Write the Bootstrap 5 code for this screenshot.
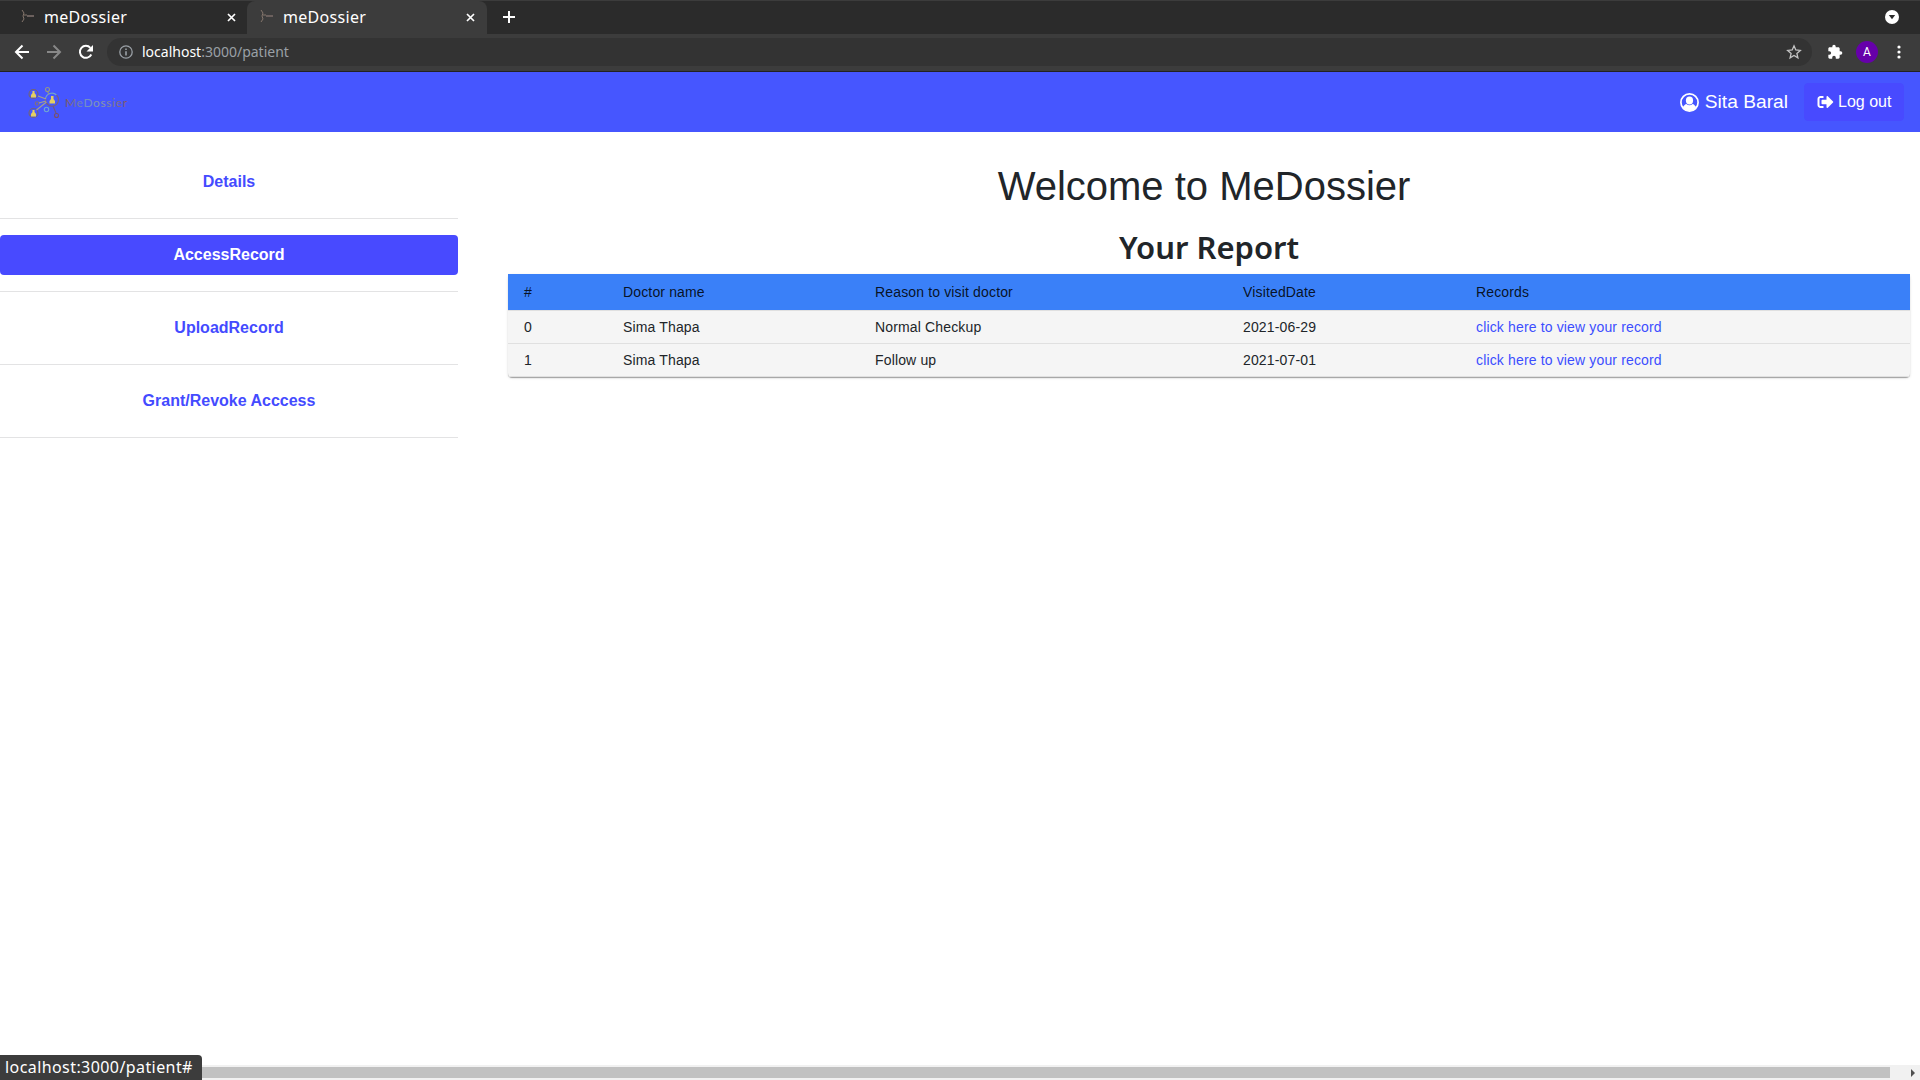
<!DOCTYPE html>
<html lang="en">
<head>
<meta charset="utf-8">
<title>meDossier</title>
<link href="https://cdn.jsdelivr.net/npm/bootstrap@5.3.0/dist/css/bootstrap.min.css" rel="stylesheet">
<style>
body{font-family:"Liberation Sans",Arial,sans-serif;color:#212529;background:#fff;height:1080px;overflow:hidden}
svg{display:block;flex:none}
.ui-font{font-family:"Noto Sans","Open Sans",sans-serif}
.tabstrip{height:34px;background:#2b2b2b;border-top:1px solid #3c3c3c}
.tab-item{height:33px;color:#fff;font-size:16px;line-height:24px;padding-top:4px;flex:none}
.tab-one{width:247px;padding-left:21px}
.tab-two{width:240px;padding-left:13px;background:#3c3c3c;border-radius:8px 8px 0 0}
.tab-title{margin-left:9px;width:183px;letter-spacing:.3px}
.tab-x{margin-top:8px}
.tab-plus{margin-left:16px;margin-top:9px}
.tab-menu{margin-right:21px;margin-top:8px}
.toolbar{height:38px;background:#3c3c3c;border-bottom:1px solid #222;padding:4px 19px 0 14px}
.tool-row{height:28px}
.omnibox{height:28px;width:1705px;flex:none;border-radius:14px;background:#333;margin-left:13px;padding:0 10px 0 12px;color:#9aa0a6;font-size:14px;line-height:26px}
.omnibox b{font-weight:400;color:#fff}
.url-text{margin-left:9px}
.avatar-dot{width:22px;height:22px;border-radius:50%;background:#60a;color:#fff;font:12px/22px Roboto,sans-serif;text-align:center;margin:0 19px 0 13px}
.topnav{height:60px;background:#4656ff;color:#fff;padding:0 16px 0 27px}
.user-name{font-size:19.2px;margin-left:6px;margin-right:16px}
.btn-logout{--bs-btn-color:#fff;--bs-btn-bg:#484aff;--bs-btn-border-color:#484aff;--bs-btn-border-radius:4px;width:100px;height:38px;padding:0 0 0 12px;line-height:36px}
.side{width:458px;flex:none;padding-top:14px}
.side-item{height:73px;border-bottom:1px solid #e3e3e4;padding:16px 0}
.side-item .nav-link{height:40px;padding:8px;line-height:24px;font-weight:700;color:#444bff;text-align:center;border-radius:4px}
.side-item .nav-link.active{background:#484aff;color:#fff}
.main-area{padding:30px 10px 0 40px}
.welcome{font-size:40px;line-height:48px;margin:0}
.report-title{font-family:"Noto Sans","Open Sans",sans-serif;font-weight:600;font-size:31px;line-height:38px;margin:18px 0 8px 10px}
.record-box{margin-left:10px;border-radius:4px;background:#f5f5f5;box-shadow:0 2px 1px -1px rgba(0,0,0,.2),0 1px 1px 0 rgba(0,0,0,.14),0 1px 3px 0 rgba(0,0,0,.12)}
.record-table{width:100%;table-layout:fixed;margin:0;font-size:14px;letter-spacing:.15px;border-collapse:separate;border-spacing:0}
.record-table th,.record-table td{padding:6px 24px 6px 16px;border-bottom:1px solid #e0e0e0;font-weight:400;line-height:20px;text-align:left}
.record-table th{background:#3a80f8;color:rgba(0,0,0,.87);line-height:24px}
.record-table a{color:#3c4eff;text-decoration:none}
.hscroll{height:15px;background:#f1f1f1}
.hthumb{width:1890px;height:11px;background:#c1c1c1}
.status-tip{left:0;bottom:0;width:202px;height:25px;background:#3c3c3c;color:#fff;border-top-right-radius:4px;font-size:16px;letter-spacing:.42px;line-height:24px;padding-left:5px;white-space:nowrap}
</style>
<script src="https://cdn.jsdelivr.net/npm/bootstrap@5.3.0/dist/js/bootstrap.bundle.min.js"></script>
</head>
<body class="d-flex flex-column position-relative">
<svg width="0" height="0" class="position-absolute"><defs>
<g id="fav" fill="none"><path d="M1 1l2 3-1 3 1 3-2 3M3 6h3" stroke="#85766c"/><path d="M6 7h7" stroke-width="2" stroke="#6b605d"/></g>
<path id="cross" d="M1 1l7 7M8 1l-7 7" stroke="#fff" stroke-width="1.7"/>
<linearGradient id="brand-ink"><stop offset="0" stop-color="#7c5560"/><stop offset=".3" stop-color="#6f8fc4"/><stop offset=".6" stop-color="#8a9aa8"/><stop offset="1" stop-color="#7d5068"/></linearGradient>
</defs></svg>
<div class="tabstrip d-flex ui-font">
  <div class="tab-item tab-one d-flex"><svg width="14" height="14" class="mt-1"><use href="#fav"/></svg><span class="tab-title">meDossier</span><svg class="tab-x" width="9" height="9"><use href="#cross"/></svg></div>
  <div class="tab-item tab-two d-flex"><svg width="14" height="14" class="mt-1"><use href="#fav"/></svg><span class="tab-title">meDossier</span><svg class="tab-x" width="9" height="9"><use href="#cross"/></svg></div>
  <svg class="tab-plus" width="12" height="14"><path d="M6 1v12M0 7h12" stroke="#fff" stroke-width="2"/></svg>
  <svg class="ms-auto tab-menu" width="14" height="16"><circle cx="7" cy="8" r="7" fill="#fff"/><path d="M3.800 6h6.400L7 10.200z" fill="#2b2b2b"/></svg>
</div>
<div class="toolbar d-flex align-items-start ui-font">
  <div class="tool-row d-flex align-items-center">
    <svg width="16" height="16" fill="none" stroke="#fff" stroke-width="2"><path d="M15 8H3M8.500 1.500L2 8l6.500 6.500"/></svg>
    <svg width="16" height="16" fill="none" stroke="#888" stroke-width="2" class="ms-3"><path d="M1 8h12M7.500 1.500L14 8l-6.500 6.500"/></svg>
    <svg width="16" height="16" class="ms-3"><path d="M13.300 10.500A6 6 0 1 1 12.400 3.800" fill="none" stroke="#fff" stroke-width="2"/><path d="M15 1v6.500H8.500z" fill="#fff"/></svg>
  </div>
  <div class="omnibox d-flex align-items-center">
    <svg width="14" height="14" fill="none" stroke="#9aa0a6"><circle cx="7" cy="7" r="6.200" stroke-width="1.300"/><path d="M7 6.200v4.300M7 3.500v1.500" stroke-width="1.600"/></svg>
    <span class="url-text"><b>localhost</b>:3000/patient</span>
    <svg class="ms-auto" width="16" height="16" fill="none" stroke="#c4c4c4" stroke-width="1.300"><path d="M8 1.800l1.800 4.200 4.500.4-3.400 3 1 4.400L8 11.500l-3.900 2.300 1-4.400-3.400-3 4.500-.4z"/></svg>
  </div>
  <div class="tool-row d-flex align-items-center ms-auto">
    <svg width="16" height="16" viewBox="0 0 24 24" fill="#fff"><path d="M20.500 11H19V7c0-1.100-.9-2-2-2h-4V3.500a2.500 2.500 0 0 0-5 0V5H4c-1.100 0-2 .9-2 2v3.800h1.500a2.700 2.700 0 0 1 0 5.400H2V20c0 1.100.9 2 2 2h3.800v-1.500a2.700 2.700 0 0 1 5.400 0V22H17c1.100 0 2-.9 2-2v-4h1.500a2.500 2.500 0 0 0 0-5z"/></svg>
    <div class="avatar-dot">A</div>
    <svg width="4" height="14" fill="#fff"><circle cx="2" cy="2" r="1.600"/><circle cx="2" cy="7" r="1.600"/><circle cx="2" cy="12" r="1.600"/></svg>
  </div>
</div>
<nav class="topnav d-flex align-items-center">
  <svg width="104" height="34" fill="none" stroke="#96917a" stroke-width="1.100">
    <circle cx="6.500" cy="9" r="4.500" stroke="#716476"/><circle cx="6.500" cy="28" r="4.500" stroke="#716476"/><path d="M18.500 14a6.500 6.500 0 0 1 11-4" stroke="#74a4cc"/><path d="M29.500 10a6.500 6.500 0 1 1-11 4" stroke="#77617c"/><circle cx="20.500" cy="4.500" r="2" stroke="#949788"/><circle cx="10" cy="18.500" r="1.800" stroke="#84707a"/><circle cx="19.500" cy="24.500" r="2.200" stroke="#70a8d0"/><circle cx="29.500" cy="30.500" r="2" stroke="#7a5068"/>
    <path d="M11 11l8 3M12 18l7-2M9.500 25l10-8" stroke="#a6a28c"/><path d="M20.500 6.500l1.500 3" stroke="#949788"/><path d="M26 21l3 7" stroke="#705a7a"/>
    <g fill="#e4cf62" stroke="none"><path d="M5.500 6h2v2l1.500 2v2.500H4V10l1.500-2zM5.500 25h2v2l1.500 2v2.500H4V29l1.500-2zM24 11h2.500v3l1.500 2v2.500h-5.500V16l1.500-2z"/></g>
    <text x="38" y="21.500" font-family="Lato" font-size="12" fill="url(#brand-ink)" stroke="none" textLength="62">MeDossier</text>
  </svg>
  <svg class="ms-auto" width="19" height="19" fill="#fff"><circle cx="9.500" cy="9.500" r="8.600" fill="none" stroke="#fff" stroke-width="1.700"/><ellipse cx="9.500" cy="7.500" rx="3.600" ry="4"/><path d="M2.800 14.200C4 12.300 5.300 11.300 6.400 11c1.800 1.800 4.400 1.800 6.200 0 1.100.3 2.400 1.300 3.600 3.200-1.600 2.400-4 3.700-6.700 3.700s-5.100-1.300-6.700-3.700z"/></svg>
  <span class="user-name">Sita Baral</span>
  <a class="btn btn-logout d-flex align-items-center" href="#"><svg width="17" height="16" viewBox="0 0 512 512" fill="#fff"><path d="M497 273L329 441c-15 15-41 4.500-41-17v-96H152c-13.300 0-24-10.700-24-24v-96c0-13.300 10.700-24 24-24h136V88c0-21.400 25.900-32 41-17l168 168c9.300 9.400 9.300 24.600 0 34zM192 436v-40c0-6.600-5.400-12-12-12H96c-17.700 0-32-14.300-32-32V160c0-17.700 14.300-32 32-32h84c6.600 0 12-5.400 12-12V76c0-6.600-5.400-12-12-12H96c-53 0-96 43-96 96v192c0 53 43 96 96 96h84c6.600 0 12-5.400 12-12z"/></svg><span class="ms-1">Log out</span></a>
</nav>
<div class="d-flex flex-grow-1">
  <aside class="side nav flex-column flex-nowrap">
    <div class="side-item"><a class="nav-link" href="#">Details</a></div>
    <div class="side-item"><a class="nav-link active" href="#">AccessRecord</a></div>
    <div class="side-item"><a class="nav-link" href="#">UploadRecord</a></div>
    <div class="side-item"><a class="nav-link" href="#">Grant/Revoke Acccess</a></div>
  </aside>
  <main class="main-area flex-grow-1">
    <h1 class="welcome text-center">Welcome to MeDossier</h1>
    <h2 class="report-title text-center">Your Report</h2>
    <div class="record-box">
      <table class="record-table">
        <colgroup><col style="width:99px"><col style="width:252px"><col style="width:368px"><col style="width:233px"><col></colgroup>
        <thead><tr><th>#</th><th>Doctor name</th><th>Reason to visit doctor</th><th>VisitedDate</th><th>Records</th></tr></thead>
        <tbody>
          <tr><td>0</td><td>Sima Thapa</td><td>Normal Checkup</td><td>2021-06-29</td><td><a href="#">click here to view your record</a></td></tr>
          <tr><td>1</td><td>Sima Thapa</td><td>Follow up</td><td>2021-07-01</td><td><a href="#">click here to view your record</a></td></tr>
        </tbody>
      </table>
    </div>
  </main>
</div>
<div class="hscroll d-flex align-items-center"><div class="hthumb"></div><svg class="ms-auto me-1" width="6" height="8"><path d="M1 0l4 4-4 4z" fill="#505050"/></svg></div>
<div class="status-tip position-absolute ui-font">localhost:3000/patient#</div>
</body>
</html>
